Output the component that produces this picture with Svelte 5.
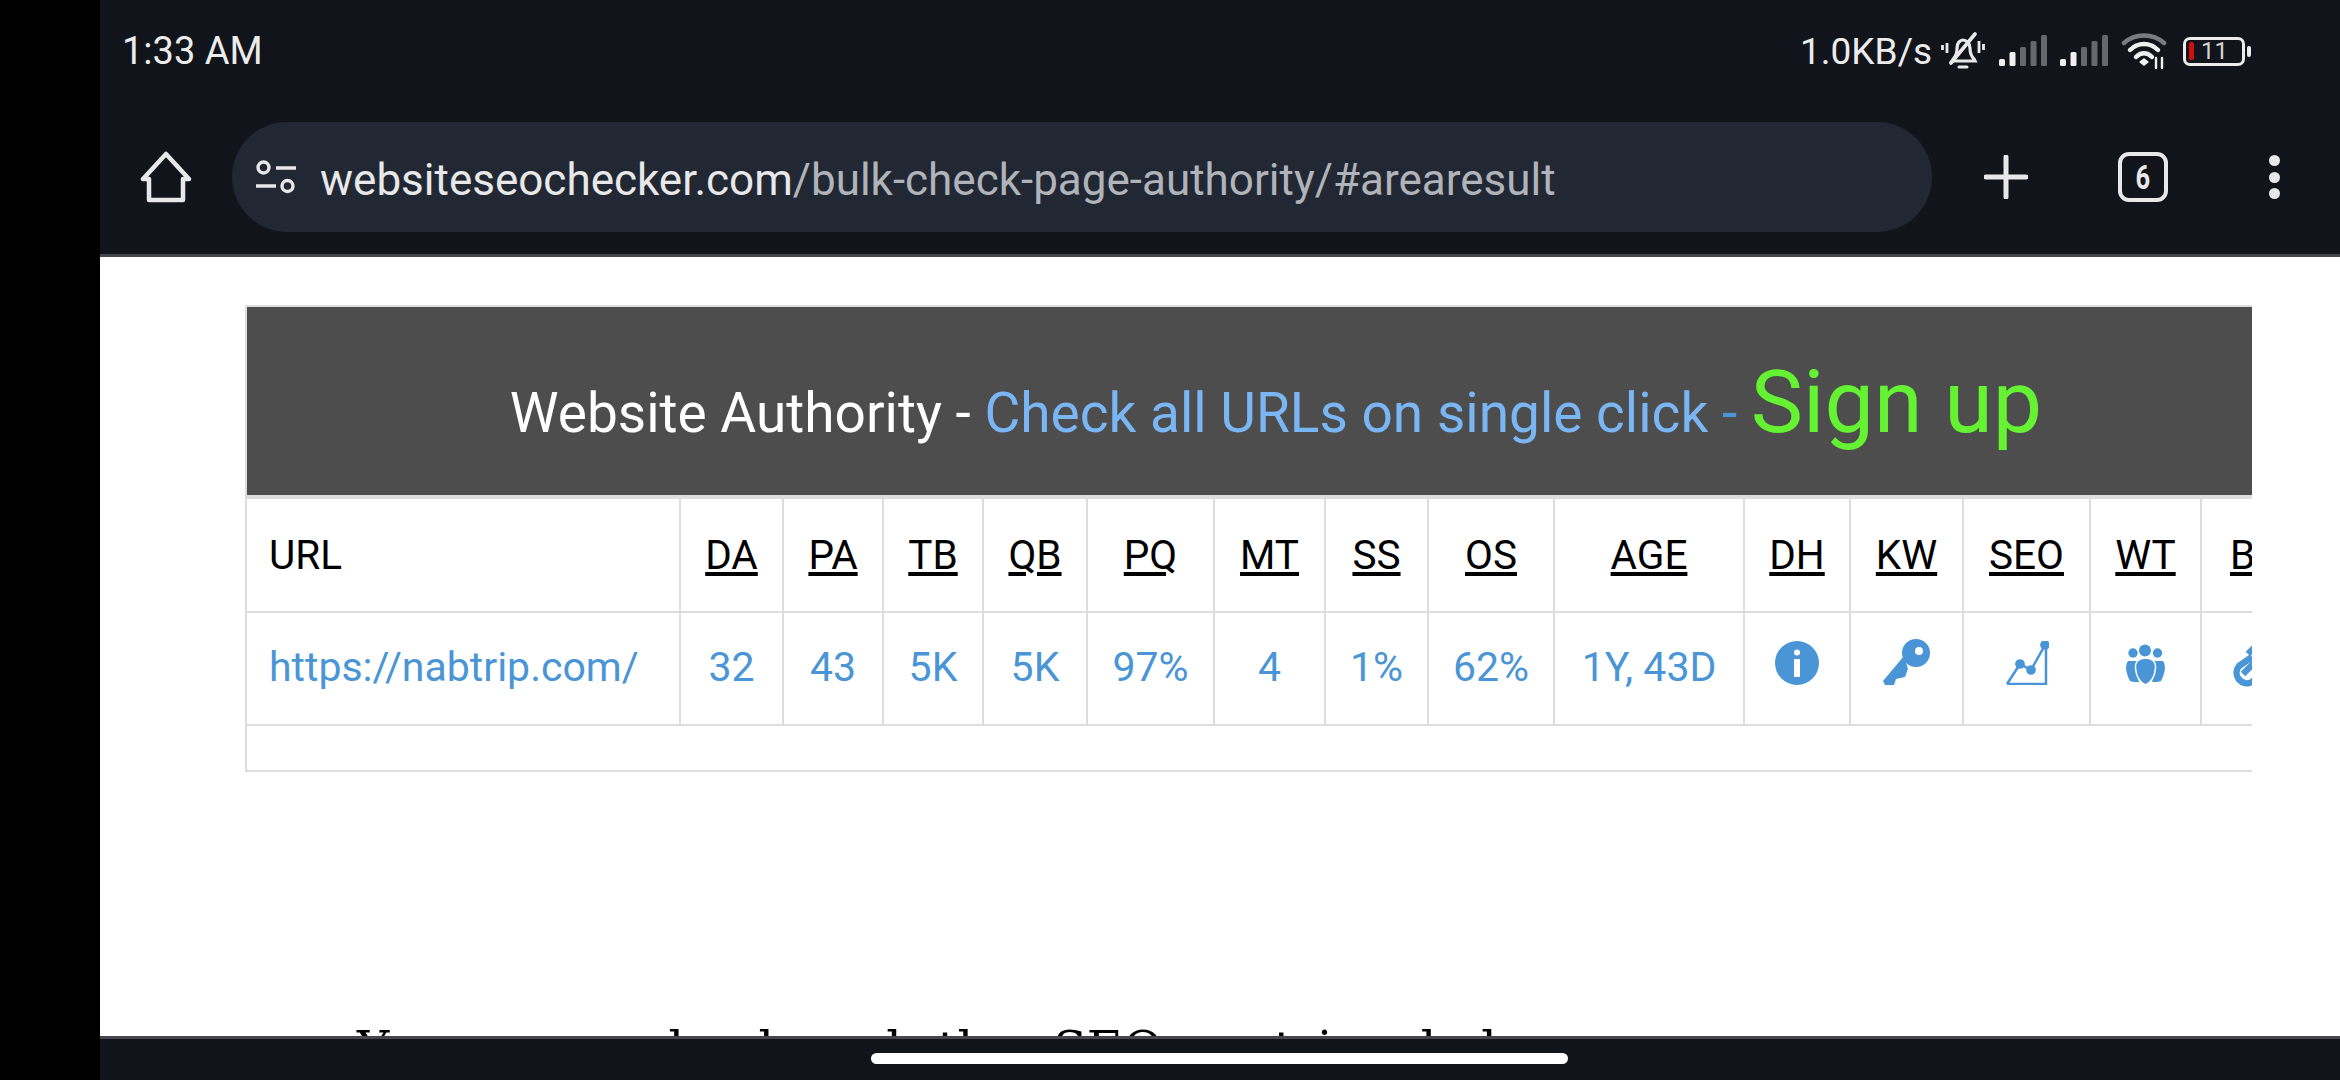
<script>
  // one result row of the bulk checker
  const cols = [
    { head: 'DA', val: '32', w: 103 },
    { head: 'PA', val: '43', w: 100 },
    { head: 'TB', val: '5K', w: 100 },
    { head: 'QB', val: '5K', w: 104 },
    { head: 'PQ', val: '97%', w: 127 },
    { head: 'MT', val: '4', w: 111 },
    { head: 'SS', val: '1%', w: 103 },
    { head: 'OS', val: '62%', w: 126 },
    { head: 'AGE', val: '1Y, 43D', w: 190 }
  ];
  const iconCols = [
    { head: 'DH', icon: 'info', w: 106 },
    { head: 'KW', icon: 'key', w: 113 },
    { head: 'SEO', icon: 'chart', w: 127 },
    { head: 'WT', icon: 'people', w: 111 },
    { head: 'BL', icon: 'link', w: 105 }
  ];
</script>

<div class="screen">
  <div class="cutout"></div>
  <div class="main">
    <header class="chrome">
      <div class="status">
        <span class="time">1:33 AM</span>
        <div class="status-right">
          <span class="speed">1.0KB/s</span>
          <svg class="bell" width="44" height="38" viewBox="0 0 44 38" fill="none" stroke="#e8e8ea">
            <path d="M13 26c3-3 3-6 3-10 0-5 3-8 6-8s7 3 7 8c0 5 1 8 4 11l1 2H11z" stroke-width="3.200"/>
            <path d="M10 31L34 2" stroke-width="3.600" stroke-linecap="round"/>
            <path d="M18 35h8" stroke-width="3" stroke-linecap="round"/>
            <path d="M6 11v10M1.500 13v5M38 9v12M42.500 12v6" stroke-width="2.800"/>
          </svg>
          {#each [0, 1] as s}
            <svg class="signal" width="48" height="32" viewBox="0 0 48 32">
              <rect x="0" y="24" width="6" height="7" rx="1.500" fill="#f0f0f0"/>
              <rect x="10.500" y="17" width="6" height="14" rx="1.500" fill="#f0f0f0"/>
              <rect x="21" y="12" width="6" height="19" rx="1.500" fill="#66686c"/>
              <rect x="31.500" y="6" width="6" height="25" rx="1.500" fill="#66686c"/>
              <rect x="42" y="0" width="6" height="31" rx="1.500" fill="#66686c"/>
            </svg>
          {/each}
          <svg class="wifi" width="46" height="36" viewBox="0 0 46 36" fill="none" stroke-linecap="round">
            <path d="M3 10C14 0 32 0 43 10" stroke="#7a7b7e" stroke-width="4.500"/>
            <path d="M9 17C17 9 29 9 37 17" stroke="#f0f0f0" stroke-width="4.500"/>
            <path d="M15 24C20 19 26 19 31 24" stroke="#f0f0f0" stroke-width="4.500"/>
            <path d="M18 29l5-4 5 4-5 4z" fill="#f0f0f0"/>
            <path d="M35 25v10M41 25v10" stroke="#f0f0f0" stroke-width="2.400"/>
          </svg>
          <div class="battery">
            <div class="cell"><span class="level"></span><span class="pct">11</span></div>
            <span class="tip"></span>
          </div>
        </div>
      </div>
      <div class="toolbar">
        <svg class="home" width="52" height="52" viewBox="0 0 52 52" fill="none" stroke="#e8e8ea" stroke-width="4.500" stroke-linejoin="round">
          <path d="M26 3L3 28h6v21h34V28h6z"/>
        </svg>
        <div class="omnibox">
          <svg class="tune" width="40" height="34" viewBox="0 0 40 34" fill="none" stroke="#e8e8ea" stroke-width="3.400">
            <circle cx="7.500" cy="7.500" r="5.500"/>
            <circle cx="31.500" cy="26" r="5.500"/>
            <path d="M20 8h20M0 26h20"/>
          </svg>
          <span class="host">websiteseochecker.com</span><span class="path">/bulk-check-page-authority/#arearesult</span>
        </div>
        <svg class="plus" width="44" height="44" viewBox="0 0 44 44" stroke="#e8e8ea" stroke-width="5" stroke-linecap="round">
          <path d="M22 2v40M2 22h40"/>
        </svg>
        <div class="tabs"><span>6</span></div>
        <div class="dots"><i></i><i></i><i></i></div>
      </div>
    </header>

    <div class="page">
      <div class="clip">
        <table>
          <colgroup>
            <col style="width: 434px" />
            {#each cols as c}
              <col style="width: {c.w}px" />
            {/each}
            {#each iconCols as c}
              <col style="width: {c.w}px" />
            {/each}
          </colgroup>
          <thead>
            <tr>
              <th colspan="15" class="banner">
                Website Authority - <span class="blue">Check all URLs on single click</span> <span class="dash">-</span> <span class="signup">Sign up</span>
              </th>
            </tr>
            <tr class="heads">
              <th class="url">URL</th>
              {#each cols as c}
                <th><u>{c.head}</u></th>
              {/each}
              {#each iconCols as c}
                <th><u>{c.head}</u></th>
              {/each}
            </tr>
          </thead>
          <tbody>
            <tr class="vals">
              <td class="url"><span class="val">https://nabtrip.com/</span></td>
              {#each cols as c}
                <td><span class="val">{c.val}</span></td>
              {/each}
              {#each iconCols as c}
                <td class="ico">
                  <div class="ico-box">
                    {#if c.icon === 'info'}
                      <svg width="44" height="44" viewBox="0 0 44 44">
                        <circle cx="22" cy="22" r="22" fill="#4a95d6"/>
                        <circle cx="22" cy="11.500" r="3" fill="#fff"/>
                        <rect x="19" y="18" width="6" height="18" fill="#fff"/>
                      </svg>
                    {:else if c.icon === 'key'}
                      <svg width="47" height="46" viewBox="0 0 47 46" fill="#4a95d6">
                        <path d="M21 17L0 42l2 4h9l2-6 9-2 3-8z"/>
                        <path fill-rule="evenodd" d="M33 0a14 14 0 1 1 0 28 14 14 0 0 1 0-28zm3 8a4 4 0 1 0 0 8 4 4 0 0 0 0-8z"/>
                      </svg>
                    {:else if c.icon === 'chart'}
                      <svg width="44" height="44" viewBox="0 0 44 44" fill="none" stroke="#4a95d6" stroke-width="2.500">
                        <path d="M2 43h39V5"/>
                        <path d="M2 43L15 23l11 6L40 4"/>
                        <circle cx="15" cy="23" r="3.600" fill="#4a95d6"/>
                        <circle cx="26" cy="29" r="3.600" fill="#4a95d6"/>
                        <circle cx="40" cy="4" r="3.600" fill="#4a95d6"/>
                      </svg>
                    {:else if c.icon === 'people'}
                      <svg width="41" height="41" viewBox="0 0 41 41" fill="#4a95d6">
                        <circle cx="8" cy="9" r="4.700"/>
                        <circle cx="20" cy="6.500" r="6"/>
                        <circle cx="32.500" cy="9" r="4.700"/>
                        <path d="M3 17h9c-1 7 0 14 2 21-3 0-7 0-9-1C2 31-1 23 3 17z"/>
                        <path d="M38 17h-9c1 7 0 14-2 21 3 0 7 0 9-1 3-6 6-14 2-20z"/>
                        <path d="M20.500 14c7 0 10.500 4 10 10-.5 7-4 14-10 17-6-3-9.500-10-10-17-.5-6 3-10 10-10z" stroke="#fff" stroke-width="1.500"/>
                      </svg>
                    {:else}
                      <svg class="link" width="46" height="46" viewBox="0 0 46 46" fill="none" stroke="#4a95d6" stroke-width="6.500">
                        <path d="M21 16l-13 9a10.500 10.500 0 0 0 13 16l8-8"/>
                        <path d="M12 33L32 13"/>
                        <path d="M25 30l13-9A10.500 10.500 0 0 0 25 5l-8 8"/>
                      </svg>
                    {/if}
                  </div>
                </td>
              {/each}
            </tr>
            <tr class="empty"><td colspan="15"></td></tr>
          </tbody>
        </table>
      </div>
      <h2 class="below">You can upload and the SEO metrics below</h2>
    </div>

    <footer class="navbar"><span class="pill"></span></footer>
  </div>
</div>

<style>
  :global(body) {
    margin: 0;
    background: #000;
    overflow: hidden;
  }

  .screen {
    display: flex;
    width: 2340px;
    height: 1080px;
    font-family: Roboto, sans-serif;
  }

  .cutout {
    width: 100px;
    flex: none;
    background: #000;
  }

  .main {
    flex: 1;
    display: flex;
    flex-direction: column;
    min-width: 0;
  }

  .chrome {
    height: 254px;
    flex: none;
    background: #11141b;
    border-bottom: 3px solid #45474f;
    color: #e8e8ea;
  }

  .status {
    height: 102px;
    display: flex;
    align-items: center;
    justify-content: space-between;
    padding: 0 89px 0 22px;
    box-sizing: border-box;
  }

  .time {
    font-size: 38px;
    color: #ececec;
  }

  .status-right {
    display: flex;
    align-items: center;
  }

  .speed {
    font-size: 37px;
    color: #ececec;
    margin-right: 9px;
  }

  .bell {
    margin-right: 14px;
  }

  .signal {
    margin-right: 13px;
  }

  .wifi {
    margin-right: 16px;
  }

  .battery {
    display: flex;
    align-items: center;
    gap: 2px;
  }

  .cell {
    width: 62px;
    height: 29px;
    box-sizing: border-box;
    border: 3px solid #ececec;
    border-radius: 7px;
    display: flex;
    align-items: center;
    gap: 7px;
    padding-left: 3px;
  }

  .level {
    width: 5px;
    height: 18px;
    background: #d40d0d;
    border-radius: 2px;
  }

  .pct {
    font-size: 24px;
    color: #d4d4d4;
    line-height: 1;
  }

  .tip {
    width: 4px;
    height: 11px;
    background: #ececec;
    border-radius: 2px;
  }

  .toolbar {
    height: 152px;
    display: flex;
    align-items: center;
    padding-bottom: 2px;
    box-sizing: border-box;
  }

  .home {
    margin-left: 40px;
    flex: none;
  }

  .omnibox {
    margin-left: 40px;
    width: 1700px;
    height: 110px;
    border-radius: 55px;
    background: #222833;
    display: flex;
    align-items: center;
    padding-left: 24px;
    box-sizing: border-box;
    font-size: 44px;
    white-space: nowrap;
    flex: none;
  }

  .tune {
    margin-right: 24px;
  }

  .host {
    color: #e8e8ea;
    padding-top: 5px;
  }

  .path {
    color: #b0b3b9;
    padding-top: 5px;
  }

  .plus {
    margin-left: 52px;
    flex: none;
  }

  .tabs {
    margin-left: 90px;
    width: 50px;
    height: 50px;
    box-sizing: border-box;
    border: 4.500px solid #e8e8ea;
    border-radius: 11px;
    display: flex;
    align-items: center;
    justify-content: center;
    font-size: 34px;
    font-weight: 700;
    flex: none;
  }

  .tabs span {
    transform: scaleX(0.75);
  }

  .dots {
    margin-left: 101px;
    display: flex;
    flex-direction: column;
    gap: 5.500px;
  }

  .dots i {
    width: 11px;
    height: 11px;
    border-radius: 50%;
    background: #e8e8ea;
  }

  .page {
    flex: 1;
    background: #fff;
    overflow: hidden;
    min-height: 0;
  }

  .clip {
    margin: 48px 88px 0 145px;
    overflow: hidden;
  }

  table {
    border-collapse: collapse;
    table-layout: fixed;
    width: 2060px;
    font-size: 40.500px;
  }

  th, td {
    border: 2px solid #dddddd;
    font-weight: 400;
    text-align: center;
    padding: 0;
    white-space: nowrap;
    overflow: hidden;
  }

  .banner {
    height: 188px;
    background: #4d4d4d;
    color: #fff;
    font-size: 55px;
    border-bottom-width: 4px;
  }

  .blue {
    color: #7ab6f4;
  }

  .dash {
    color: #4a95d6;
  }

  .signup {
    color: #64f233;
    font-size: 88px;
  }

  .heads th {
    height: 112px;
    color: #000;
  }

  .vals td {
    box-sizing: border-box;
    height: 113px;
    color: #4a95d6;
    font-size: 41px;
    padding-bottom: 3px;
  }

  .url {
    text-align: left;
    padding-left: 22px;
  }

  .vals .ico {
    padding-bottom: 14px;
  }

  .ico-box {
    display: flex;
    justify-content: center;
    align-items: flex-end;
    height: 47px;
  }

  .link {
    margin-bottom: -2px;
  }

  .empty td {
    height: 44px;
  }

  .below {
    margin: 0;
    padding: 249px 0 0 257px;
    font-family: "DejaVu Serif", serif;
    font-size: 49px;
    font-weight: 400;
    word-spacing: 20px;
    color: #000;
    white-space: nowrap;
  }

  .navbar {
    height: 41px;
    flex: none;
    background: #11141b;
    border-top: 3px solid #45474f;
    position: relative;
  }

  .pill {
    position: absolute;
    left: 771px;
    top: 14px;
    width: 697px;
    height: 11px;
    border-radius: 6px;
    background: #fff;
  }
</style>
